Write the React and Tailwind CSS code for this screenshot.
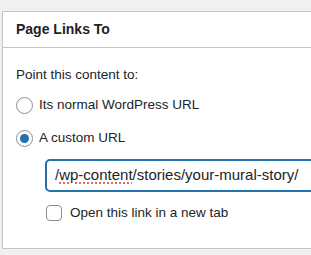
export default function App() {
  return (
    <div className="w-[311px] h-[255px] bg-[#f0f0f1] overflow-hidden pt-[11px] pl-[2px] font-['Liberation_Sans',Arial,sans-serif] text-[#1d2327]">
      <div className="w-[330px] h-[238px] bg-white border border-[#c3c4c7]">
        <div className="h-[36px] border-b border-[#c3c4c7] flex items-center pl-[13px]">
          <h2 className="text-[14px] font-semibold">Page Links To</h2>
        </div>
        <div className="pl-[13px] pt-[18px]">
          <p className="text-[13.5px] leading-[18px]">Point this content to:</p>
          <label className="mt-[11px] flex items-center gap-[6px] h-[20px]">
            <span className="w-[17px] h-[17px] rounded-full border border-[#8c8f94] bg-white shrink-0" />
            <span className="text-[13.5px]">Its normal WordPress URL</span>
          </label>
          <label className="mt-[13px] flex items-center gap-[6px] h-[20px]">
            <span className="w-[17px] h-[17px] rounded-full border border-[#8c8f94] bg-white shrink-0 flex items-center justify-center">
              <span className="w-[9px] h-[9px] rounded-full bg-[#2271b1]" />
            </span>
            <span className="text-[13.5px]">A custom URL</span>
          </label>
          <div className="ml-[29px] mt-[11px] h-[33px] w-[280px] rounded-[5px] border-2 border-[#2271b1] flex items-center pl-[8px] text-[15px]">
            <span className="whitespace-nowrap">
              /<span className="underline decoration-dotted decoration-[#d63638] underline-offset-[2px]">wp-content</span>/stories/your-mural-story/
            </span>
          </div>
          <label className="ml-[30px] mt-[12px] flex items-center gap-[8px] h-[18px]">
            <span className="w-[16px] h-[16px] rounded-[4px] border border-[#8c8f94] bg-white shrink-0" />
            <span className="text-[13.5px]">Open this link in a new tab</span>
          </label>
        </div>
      </div>
    </div>
  )
}
